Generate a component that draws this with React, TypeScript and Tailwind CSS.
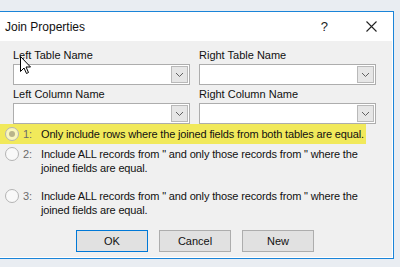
import React from 'react';

const Combo: React.FC = () => (
  <div className="h-[21px] w-[177px] border border-[#adadad] bg-white flex items-center justify-end pr-[1px]">
    <div className="h-[17px] w-[17px] border border-[#b9b9b9] bg-[#e6e6e6] flex items-center justify-center">
      <svg width="9" height="6" viewBox="0 0 9 6">
        <path d="M1 1 L4.5 4.5 L8 1" fill="none" stroke="#606060" strokeWidth="1" />
      </svg>
    </div>
  </div>
);

const Radio: React.FC<{ checked?: boolean }> = ({ checked }) => (
  <div className="h-[14px] w-[14px] shrink-0 rounded-full border border-[#b4b4b4] bg-white/60 flex items-center justify-center">
    {checked && <div className="h-[6px] w-[6px] rounded-full bg-[#b9b48a]" />}
  </div>
);

const Option: React.FC<{ num: string; lines: string[]; checked?: boolean; highlight?: boolean }> = ({
  num,
  lines,
  checked,
  highlight,
}) => (
  <div className={`flex w-[366px] ${highlight ? 'bg-[#f1e95b] h-[20px] items-center' : 'items-start'}`}>
    <div className="w-[5px] shrink-0" />
    <Radio checked={checked} />
    <div className="w-[22px] shrink-0 pl-[4px] text-[#6b6b6b] leading-[14px]">{num}</div>
    <div className="leading-[14px] text-[#111] whitespace-nowrap tracking-[-0.15px]">
      {lines.map((l) => (
        <div key={l}>{l}</div>
      ))}
    </div>
  </div>
);

const Button: React.FC<{ label: string; primary?: boolean }> = ({ label, primary }) => (
  <div
    className={`h-[22px] w-[72px] flex items-center justify-center bg-[#e1e1e1] border ${
      primary ? 'border-[#0078d7]' : 'border-[#adadad]'
    } text-[#111]`}
  >
    {label}
  </div>
);

const text2 = 'Include ALL records from " and only those records from " where the';

export default function App() {
  return (
    <div
      className="w-[400px] h-[267px] bg-[#e9edf2] pt-[11px] relative overflow-hidden text-[11px]"
      style={{ fontFamily: '"Liberation Sans", Arial, sans-serif' }}
    >
      <div className="w-[394px] h-[248px] border-t border-r border-b border-[#1a84d8] flex flex-col">
        {/* title bar */}
        <div className="h-[29px] bg-white flex items-center pl-[5px] pr-[16px]">
          <span className="text-[12px] text-[#111] flex-1">Join Properties</span>
          <span className="text-[13px] text-[#222] mr-[38px]">?</span>
          <svg width="11" height="11" viewBox="0 0 11 11">
            <path d="M0.5 0.5 L10.5 10.5 M10.5 0.5 L0.5 10.5" stroke="#222" strokeWidth="1.1" />
          </svg>
        </div>
        {/* body */}
        <div className="flex-1 bg-[#f0f0f0] border-r border-b border-white flex flex-col pt-[5px]">
          <div className="grid grid-cols-[186px_177px] pl-[13px]">
            <div>
              <div className="h-[18px] leading-[18px] text-[#111]">Left Table Name</div>
              <Combo />
              <div className="h-[18px] leading-[18px] text-[#111]">Left Column Name</div>
              <Combo />
            </div>
            <div>
              <div className="h-[18px] leading-[18px] text-[#111]">Right Table Name</div>
              <Combo />
              <div className="h-[18px] leading-[18px] text-[#111]">Right Column Name</div>
              <Combo />
            </div>
          </div>
          <Option
            num="1:"
            checked
            highlight
            lines={['Only include rows where the joined fields from both tables are equal.']}
          />
          <div className="mt-[3px]">
            <Option num="2:" lines={[text2, 'joined fields are equal.']} />
          </div>
          <div className="mt-[14px]">
            <Option num="3:" lines={[text2, 'joined fields are equal.']} />
          </div>
          <div className="flex gap-[11px] pl-[76px] mt-[13px]">
            <Button label="OK" primary />
            <Button label="Cancel" />
            <Button label="New" />
          </div>
        </div>
      </div>
      {/* mouse pointer */}
      <svg className="absolute left-[20px] top-[56px]" width="13" height="19" viewBox="0 0 13 19">
        <path d="M0.5 0.5 L0.5 15.5 L4 12 L6.5 17.5 L8.5 16.5 L6 11 L10.5 11 Z" fill="#fff" stroke="#000" strokeWidth="1" />
      </svg>
    </div>
  );
}
